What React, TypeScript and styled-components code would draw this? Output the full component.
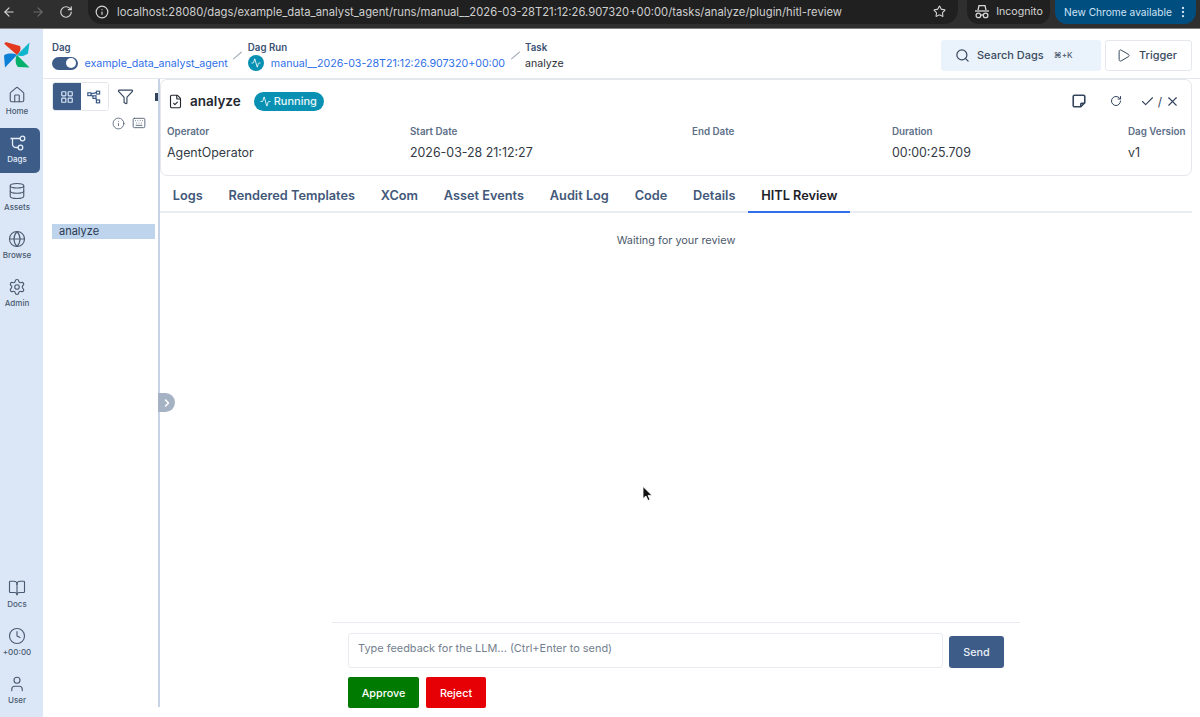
import styled, { createGlobalStyle } from 'styled-components';
import {
	Activity,
	ArrowLeft,
	ArrowRight,
	BookOpen,
	Check,
	ChevronRight,
	Clock,
	Database,
	FileCheck,
	Filter,
	Globe,
	House,
	Info,
	Keyboard,
	LayoutGrid,
	EllipsisVertical,
	Play,
	RotateCw,
	Search,
	Settings,
	Star,
	User,
	X,
} from 'lucide-react';

const GlobalStyle = createGlobalStyle`
	html, body {
		margin: 0;
		padding: 0;
		height: 717px;
		background: #fff;
		overflow: hidden;
		font-family: Inter, "Liberation Sans", sans-serif;
	}
	* { box-sizing: border-box; }
`;

const PinwheelLogo = () => (
	<svg width="26" height="26" viewBox="0 0 26 26">
		<path d="M13 13 L0.5 2 C0.5 0.5 2 0 3.5 0.5 L16 4 C17.5 7 15.5 11 13 13Z" fill="#e43921" />
		<path d="M13 13 L25.5 0.5 L24 11.5 C21 14 16 15 13 13Z" fill="#11b5cc" />
		<path d="M13 13 L25.5 25.5 L14 25 C11 22 11 16 13 13Z" fill="#04b06b" />
		<path d="M13 13 L1 25.5 L0 13.5 C3 11 9 11 13 13Z" fill="#0c7fd6" />
	</svg>
);

const DagsIcon = () => (
	<svg width="18" height="18" viewBox="0 0 18 18" fill="none" stroke="currentColor" strokeWidth="1.3">
		<circle cx="14.5" cy="4.5" r="2.3" />
		<circle cx="12.5" cy="13.5" r="2.3" />
		<path d="M2.5 4.5 H12.2 M4.5 4.5 V10 C4.5 12.5 6 13.5 8.5 13.5 H10.2" />
	</svg>
);

const GraphIcon = () => (
	<svg width="14" height="14" viewBox="0 0 14 14" fill="none" stroke="currentColor" strokeWidth="1.2">
		<rect x="0.8" y="2.8" width="3.2" height="2.8" />
		<rect x="9.4" y="1.2" width="3.2" height="2.8" />
		<rect x="6" y="5.8" width="3" height="2.6" />
		<rect x="9.4" y="10" width="3.2" height="2.8" />
		<path d="M4 3.8 L9.4 2.6 M4 5 L6 6.6 M8.4 8.4 L10 10" />
	</svg>
);

const NoteIcon = () => (
	<svg width="16" height="16" viewBox="0 0 18 18" fill="none" stroke="currentColor" strokeWidth="1.8">
		<path d="M4 2.5 H14 a1.5 1.5 0 0 1 1.5 1.5 V11 L11 15.5 H4 a1.5 1.5 0 0 1 -1.5 -1.5 V4 a1.5 1.5 0 0 1 1.5 -1.5Z" />
		<path d="M15.5 11.5 H12 a1 1 0 0 0 -1 1 V15.5" />
	</svg>
);

const IncognitoIcon = () => (
	<svg width="16" height="16" viewBox="0 0 16 16" fill="none" stroke="currentColor" strokeWidth="1.3">
		<path d="M4 6 L5 1.6 H11 L12 6" />
		<path d="M1 7 H15" />
		<circle cx="4.4" cy="11.4" r="2.3" />
		<circle cx="11.6" cy="11.4" r="2.3" />
		<path d="M6.7 11 H9.3" />
	</svg>
);

const ArrowCursor = () => (
	<svg width="12" height="16" viewBox="0 0 12 16">
		<path d="M1 0.5 V12.5 L4 10 L6 14.5 L8 13.6 L6 9.4 H10 Z" fill="#111" stroke="#fff" strokeWidth="0.8" />
	</svg>
);

const navTop = [
	{ label: 'Home', icon: <House size={18} strokeWidth={1.5} /> },
	{ label: 'Dags', icon: <DagsIcon />, active: true },
	{ label: 'Assets', icon: <Database size={18} strokeWidth={1.5} /> },
	{ label: 'Browse', icon: <Globe size={18} strokeWidth={1.5} /> },
	{ label: 'Admin', icon: <Settings size={18} strokeWidth={1.5} /> },
];

const navBottom = [
	{ label: 'Docs', icon: <BookOpen size={18} strokeWidth={1.5} /> },
	{ label: '+00:00', icon: <Clock size={18} strokeWidth={1.5} /> },
	{ label: 'User', icon: <User size={18} strokeWidth={1.5} /> },
];

const details = [
	{ label: 'Operator', value: 'AgentOperator', width: 243 },
	{ label: 'Start Date', value: '2026-03-28 21:12:27', width: 282 },
	{ label: 'End Date', value: '', width: 200 },
	{ label: 'Duration', value: '00:00:25.709', width: 236 },
	{ label: 'Dag Version', value: 'v1', width: 60 },
];

const tabs = ['Logs', 'Rendered Templates', 'XCom', 'Asset Events', 'Audit Log', 'Code', 'Details', 'HITL Review'];

const App = () => {
	return (
		<Page>
			<GlobalStyle />
			<ChromeBar>
				<ChromeNav>
					<ArrowLeft size={14} />
					<ArrowRight size={14} color="#6b6b6b" />
					<RotateCw size={14} />
				</ChromeNav>
				<UrlPill>
					<Info size={14} />
					<UrlText>
						localhost:28080/dags/example_data_analyst_agent/runs/manual__2026-03-28T21:12:26.907320+00:00/tasks/analyze/plugin/hitl-review
					</UrlText>
					<Star size={13} />
				</UrlPill>
				<IncognitoPill>
					<IncognitoIcon />
					Incognito
				</IncognitoPill>
				<UpdatePill>
					New Chrome available
					<EllipsisVertical size={14} />
				</UpdatePill>
			</ChromeBar>
			<Body>
				<Sidebar>
					<LogoWrap>
						<PinwheelLogo />
					</LogoWrap>
					<NavGroup>
						{navTop.map((item) => (
							<NavItem key={item.label} $active={item.active}>
								{item.icon}
								<span>{item.label}</span>
							</NavItem>
						))}
					</NavGroup>
					<NavGroup>
						{navBottom.map((item) => (
							<NavItem key={item.label}>
								{item.icon}
								<span>{item.label}</span>
							</NavItem>
						))}
					</NavGroup>
				</Sidebar>
				<Main>
					<Header>
						<Crumb>
							<CrumbLabel>Dag</CrumbLabel>
							<CrumbRow>
								<Toggle />
								<CrumbLink>example_data_analyst_agent</CrumbLink>
							</CrumbRow>
						</Crumb>
						<Slash />
						<Crumb>
							<CrumbLabel>Dag Run</CrumbLabel>
							<CrumbRow>
								<RunDot>
									<Activity size={10} strokeWidth={2} />
								</RunDot>
								<CrumbLink>manual__2026-03-28T21:12:26.907320+00:00</CrumbLink>
							</CrumbRow>
						</Crumb>
						<Slash />
						<Crumb>
							<CrumbLabel>Task</CrumbLabel>
							<CrumbRow>
								<CrumbText>analyze</CrumbText>
							</CrumbRow>
						</Crumb>
						<HeaderActions>
							<SearchBox>
								<Search size={15} strokeWidth={2} />
								<span>Search Dags</span>
								<Kbd>⌘+K</Kbd>
							</SearchBox>
							<TriggerButton>
								<Play size={15} strokeWidth={1.6} />
								Trigger
							</TriggerButton>
						</HeaderActions>
					</Header>
					<Content>
						<GridPanel>
							<GridTools>
								<ViewSwitch>
									<ViewButton $active>
										<LayoutGrid size={14} />
									</ViewButton>
									<ViewButton>
										<GraphIcon />
									</ViewButton>
								</ViewSwitch>
								<FilterButton>
									<Filter size={17} strokeWidth={1.6} />
								</FilterButton>
								<ClippedDot />
							</GridTools>
							<GridHints>
								<Info size={13} strokeWidth={1.5} />
								<Keyboard size={14} strokeWidth={1.5} />
							</GridHints>
							<TaskRow>analyze</TaskRow>
						</GridPanel>
						<Divider>
							<CollapseHandle>
								<ChevronRight size={12} strokeWidth={3} />
							</CollapseHandle>
						</Divider>
						<DetailPanel>
							<TaskCard>
								<TaskTop>
									<TaskTitle>
										<FileCheck size={15} strokeWidth={1.8} />
										<span>analyze</span>
										<StatusBadge>
											<Activity size={11} strokeWidth={2} />
											Running
										</StatusBadge>
									</TaskTitle>
									<TaskActions>
										<NoteIcon />
										<RotateCw size={12} strokeWidth={2} />
										<MarkGroup>
											<Check size={15} strokeWidth={1.7} />
											<MarkSlash>/</MarkSlash>
											<X size={15} strokeWidth={1.7} />
										</MarkGroup>
									</TaskActions>
								</TaskTop>
								<DetailRow>
									{details.map((d) => (
										<DetailCell key={d.label} $width={d.width}>
											<DetailLabel>{d.label}</DetailLabel>
											<DetailValue>{d.value}</DetailValue>
										</DetailCell>
									))}
								</DetailRow>
							</TaskCard>
							<TabBar>
								{tabs.map((t) => (
									<Tab key={t} $active={t === 'HITL Review'}>
										{t}
									</Tab>
								))}
							</TabBar>
							<ReviewPane>
								<WaitingText>Waiting for your review</WaitingText>
								<Composer>
									<ComposerRow>
										<FeedbackInput placeholder="Type feedback for the LLM... (Ctrl+Enter to send)" />
										<SendButton>Send</SendButton>
									</ComposerRow>
									<DecisionRow>
										<DecisionButton $color="#007a00" $width={71}>
											Approve
										</DecisionButton>
										<DecisionButton $color="#e60005" $width={60}>
											Reject
										</DecisionButton>
									</DecisionRow>
								</Composer>
								<CursorMark>
									<ArrowCursor />
								</CursorMark>
							</ReviewPane>
						</DetailPanel>
					</Content>
				</Main>
			</Body>
		</Page>
	);
};

export default App;

const Page = styled.div`
	width: 1200px;
	height: 717px;
	display: flex;
	flex-direction: column;
	overflow: hidden;
	color: #1f2937;
`;

const ChromeBar = styled.div`
	height: 29px;
	flex: none;
	display: flex;
	align-items: center;
	background: #2f2f2f;
	border-bottom: 1px solid #7d7d7d;
	color: #d6d6d6;
	padding: 0 0 5px 2px;
	font-size: 11.5px;
`;

const ChromeNav = styled.div`
	width: 86px;
	display: flex;
	align-items: center;
	gap: 14.5px;
`;

const UrlPill = styled.div`
	width: 870px;
	height: 24px;
	flex: none;
	display: flex;
	align-items: center;
	background: #202020;
	border-radius: 0 0 14px 14px;
	padding: 0 12px 0 7px;
	gap: 8px;
`;

const UrlText = styled.div`
	flex: 1;
	white-space: nowrap;
	overflow: hidden;
	color: #cfcfcf;
	font-size: 11.26px;
`;

const IncognitoPill = styled.div`
	margin-left: 9px;
	height: 24px;
	width: 83px;
	flex: none;
	display: flex;
	align-items: center;
	justify-content: center;
	gap: 6px;
	background: #202020;
	border-radius: 0 0 12px 12px;
	font-size: 10.6px;
`;

const UpdatePill = styled.div`
	margin-left: 5px;
	height: 24px;
	width: 141px;
	flex: none;
	display: flex;
	align-items: center;
	justify-content: space-between;
	background: #004d80;
	border-radius: 0 0 12px 12px;
	color: #cfe4f5;
	padding: 0 6px 0 9px;
	font-size: 10.2px;
	white-space: nowrap;
`;

const Body = styled.div`
	flex: 1;
	display: flex;
	min-height: 0;
`;

const Sidebar = styled.nav`
	width: 43px;
	flex: none;
	display: flex;
	flex-direction: column;
	background: #dbe7f7;
	padding-bottom: 3px;
`;

const LogoWrap = styled.div`
	height: 51px;
	flex: none;
	padding: 13px 0 0 4px;
`;

const NavGroup = styled.div`
	width: 100%;
	display: flex;
	flex-direction: column;
	gap: 3px;
	&:last-child {
		margin-top: auto;
	}
`;

const NavItem = styled.div<{ $active?: boolean }>`
	width: 40px;
	height: 45px;
	flex: none;
	display: flex;
	flex-direction: column;
	align-items: center;
	gap: 2px;
	padding: 6px 6px 0 0;
	border-radius: 0 5px 5px 0;
	background: ${({ $active }) => ($active ? '#3d5c88' : 'transparent')};
	color: ${({ $active }) => ($active ? '#e5edf8' : '#4a5a70')};
	font-size: 8px;
	line-height: 10px;
	font-weight: 500;
`;

const Main = styled.div`
	flex: 1;
	min-width: 0;
	display: flex;
	flex-direction: column;
`;

const Header = styled.header`
	height: 50px;
	flex: none;
	display: flex;
	align-items: flex-start;
	padding: 13px 8px 0 9px;
	border-bottom: 1px solid #e4e7eb;
`;

const Crumb = styled.div`
	display: flex;
	flex-direction: column;
	gap: 1px;
`;

const CrumbLabel = styled.div`
	font-size: 9.7px;
	font-weight: 600;
	line-height: 12px;
	color: #3c5273;
`;

const CrumbRow = styled.div`
	display: flex;
	align-items: center;
	gap: 6.5px;
	height: 16px;
`;

const Toggle = styled.span`
	position: relative;
	width: 26px;
	height: 13px;
	border-radius: 7px;
	background: #3d5c88;
	&::after {
		content: '';
		position: absolute;
		top: 1.5px;
		right: 2px;
		width: 10px;
		height: 10px;
		border-radius: 50%;
		background: #fff;
	}
`;

const CrumbLink = styled.span`
	font-size: 10.65px;
	color: #2f6fe8;
	white-space: nowrap;
`;

const CrumbText = styled.span`
	font-size: 10.6px;
	color: #2b2f36;
`;

const Slash = styled.span`
	width: 11px;
	height: 1px;
	flex: none;
	margin: 13px 4.5px 0 4.5px;
	background: #9aa3ad;
	transform: rotate(-40deg);
`;

const RunDot = styled.span`
	width: 16px;
	height: 16px;
	margin-right: 0.5px;
	border-radius: 50%;
	background: #0891b2;
	color: #fff;
	display: flex;
	align-items: center;
	justify-content: center;
`;

const HeaderActions = styled.div`
	margin-left: auto;
	margin-top: -2px;
	display: flex;
	gap: 4px;
`;

const SearchBox = styled.div`
	width: 160px;
	height: 31px;
	display: flex;
	align-items: center;
	padding: 0 0 1px 14px;
	background: #eaf2fb;
	border-radius: 3px;
	color: #3a4a60;
	font-size: 11px;
	font-weight: 500;
	svg {
		margin-right: 7px;
	}
`;

const Kbd = styled.span`
	margin-left: 7px;
	font-size: 8px;
	padding: 2px 3px;
	border-radius: 2px;
	color: #4c5b70;
`;

const TriggerButton = styled.button`
	width: 87px;
	height: 31px;
	display: flex;
	align-items: center;
	justify-content: center;
	gap: 8px;
	padding: 0 4px 1px 0;
	background: #fff;
	border: 1px solid #e4e7eb;
	border-radius: 3px;
	color: #3a4a60;
	font: 500 11px Inter, sans-serif;
`;

const Content = styled.div`
	flex: 1;
	min-height: 0;
	display: flex;
	padding-bottom: 10px;
`;

const GridPanel = styled.aside`
	width: 115px;
	flex: none;
	padding: 3px 3px 0 9px;
	overflow: hidden;
`;

const GridTools = styled.div`
	display: flex;
	align-items: center;
	height: 29px;
`;

const ViewSwitch = styled.div`
	display: flex;
	width: 57px;
	height: 29px;
	flex: none;
	border: 1px solid #e4e7eb;
	border-radius: 3px;
	overflow: hidden;
`;

const ViewButton = styled.div<{ $active?: boolean }>`
	flex: 1;
	display: flex;
	align-items: center;
	justify-content: center;
	background: ${({ $active }) => ($active ? '#3d5c88' : '#fff')};
	color: ${({ $active }) => ($active ? '#dbe7f7' : '#3d5c88')};
`;

const FilterButton = styled.div`
	margin-left: 8px;
	display: flex;
	color: #33445c;
`;

const ClippedDot = styled.span`
	margin-left: 21px;
	width: 3px;
	height: 8px;
	background: #33445c;
	flex: none;
`;

const GridHints = styled.div`
	display: flex;
	align-items: center;
	justify-content: flex-end;
	gap: 7px;
	height: 18px;
	margin-top: 3px;
	padding-right: 9px;
	color: #4a5a70;
`;

const TaskRow = styled.div`
	margin-top: 92px;
	height: 15px;
	background: #bed3ec;
	padding-left: 7px;
	font-size: 11px;
	line-height: 15px;
	color: #2b3a50;
`;

const Divider = styled.div`
	position: relative;
	width: 2px;
	flex: none;
	background: #c6d3e4;
`;

const CollapseHandle = styled.div`
	position: absolute;
	top: 314px;
	left: 0;
	width: 17px;
	height: 19px;
	display: flex;
	align-items: center;
	justify-content: center;
	border-radius: 0 10px 10px 0;
	background: #a5b2c4;
	color: #fff;
`;

const DetailPanel = styled.main`
	flex: 1;
	min-width: 0;
	display: flex;
	flex-direction: column;
	padding-right: 8px;
`;

const TaskCard = styled.section`
	height: 97px;
	flex: none;
	border: 1px solid #e4e7eb;
	border-radius: 7px;
	padding: 0 6px;
`;

const TaskTop = styled.div`
	height: 42px;
	display: flex;
	align-items: center;
	justify-content: space-between;
	padding-right: 5px;
`;

const TaskTitle = styled.div`
	display: flex;
	align-items: center;
	gap: 7px;
	padding-left: 1px;
	font-size: 13.5px;
	font-weight: 600;
	color: #23272f;
`;

const StatusBadge = styled.span`
	display: inline-flex;
	align-items: center;
	gap: 3px;
	height: 19px;
	margin-left: 6px;
	padding: 0 7px 0 6px;
	border-radius: 10px;
	background: #0891b2;
	color: #e9f7fb;
	font-size: 11px;
	font-weight: 500;
`;

const TaskActions = styled.div`
	display: flex;
	align-items: center;
	gap: 23px;
	color: #33445c;
`;

const MarkGroup = styled.div`
	display: flex;
	align-items: center;
	gap: 3px;
	margin-left: -5px;
`;

const MarkSlash = styled.span`
	font-size: 12px;
`;

const DetailRow = styled.div`
	display: flex;
	padding-top: 3px;
`;

const DetailCell = styled.div<{ $width: number }>`
	width: ${({ $width }) => $width}px;
	flex: none;
`;

const DetailLabel = styled.div`
	font-size: 9.8px;
	font-weight: 600;
	line-height: 14px;
	color: #5d6f88;
	white-space: nowrap;
`;

const DetailValue = styled.div`
	margin-top: 5px;
	font-size: 12.4px;
	line-height: 18px;
	color: #333a44;
	white-space: nowrap;
`;

const TabBar = styled.div`
	height: 37px;
	flex: none;
	display: flex;
	align-items: stretch;
	padding-left: 0;
	border-bottom: 2px solid #e8ecf1;
`;

const Tab = styled.div<{ $active?: boolean }>`
	display: flex;
	align-items: center;
	padding: 3px 13px 0 12.8px;
	margin-bottom: -2px;
	font-size: 12.75px;
	font-weight: 600;
	color: ${({ $active }) => ($active ? '#1c2129' : '#42587a')};
	border-bottom: 2px solid ${({ $active }) => ($active ? '#2f6fe8' : 'transparent')};
	white-space: nowrap;
`;

const ReviewPane = styled.div`
	position: relative;
	flex: 1;
	min-height: 0;
	display: flex;
	flex-direction: column;
	align-items: center;
`;

const WaitingText = styled.div`
	margin-top: 20px;
	font-size: 10.9px;
	line-height: 14px;
	color: #4c5a6c;
`;

const Composer = styled.div`
	margin-top: auto;
	margin-bottom: -1px;
	width: 688px;
	border-top: 1px solid #e8ebef;
	padding: 10px 16px 0 16px;
	display: flex;
	flex-direction: column;
	gap: 9px;
`;

const ComposerRow = styled.div`
	display: flex;
	align-items: flex-end;
	gap: 6px;
`;

const FeedbackInput = styled.input`
	flex: 1;
	height: 35px;
	padding: 0 9px 6px;
	border: 1px solid #e8ebef;
	border-radius: 3px;
	font: 400 10.95px Inter, sans-serif;
	outline: none;
	&::placeholder {
		color: #74808f;
	}
`;

const SendButton = styled.button`
	width: 55px;
	height: 32px;
	border: none;
	border-radius: 3px;
	background: #3d5c88;
	color: #e9eff7;
	font: 500 10.8px Inter, sans-serif;
`;

const DecisionRow = styled.div`
	display: flex;
	gap: 7px;
`;

const DecisionButton = styled.button<{ $color: string; $width: number }>`
	width: ${({ $width }) => $width}px;
	height: 31px;
	padding-top: 2px;
	border: none;
	border-radius: 2px;
	background: ${({ $color }) => $color};
	color: #fff;
	font: 500 10.8px Inter, sans-serif;
`;

const CursorMark = styled.div`
	position: absolute;
	top: 273px;
	left: 482px;
	display: flex;
`;
